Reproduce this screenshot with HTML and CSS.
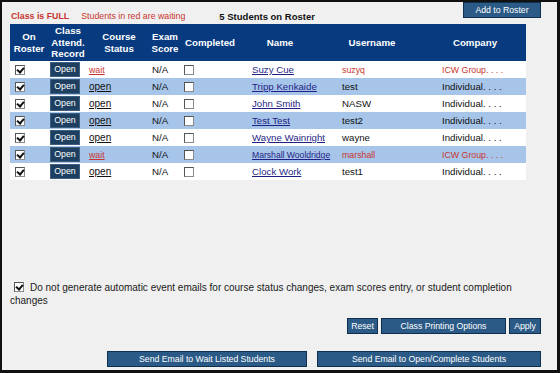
FILE: index.html
```html
<!DOCTYPE html>
<html lang="en">
<head>
    <meta charset="UTF-8" />
    <title>Class Roster</title>
    <link rel="stylesheet" href="styles.css">
</head>
<body>
    <div class="frame">
        <div class="topbar">
            <span class="full">Class is FULL</span>
            <span class="waiting">Students in red are waiting</span>
            <span class="count">5 Students on Roster</span>
            <button class="btn btn-add">Add to Roster</button>
        </div>

        <table class="roster">
            <thead>
                <tr>
                    <th class="c-roster">On<br>Roster</th>
                    <th class="c-attend">Class<br>Attend.<br>Record</th>
                    <th class="c-status">Course<br>Status</th>
                    <th class="c-exam">Exam<br>Score</th>
                    <th class="c-done">Completed</th>
                    <th class="c-name">Name</th>
                    <th class="c-user">Username</th>
                    <th class="c-company">Company</th>
                </tr>
            </thead>
            <tbody>
                <tr class="waitlist">
                    <td class="c-roster"><span class="cb checked"></span></td>
                    <td class="c-attend"><span class="open-btn">Open</span></td>
                    <td class="c-status"><a class="status">wait</a></td>
                    <td class="c-exam">N/A</td>
                    <td class="c-done"><span class="cb"></span></td>
                    <td class="c-name"><a class="name">Suzy Cue</a></td>
                    <td class="c-user">suzyq</td>
                    <td class="c-company">ICW Group. . . .</td>
                </tr>
                <tr class="alt">
                    <td class="c-roster"><span class="cb checked"></span></td>
                    <td class="c-attend"><span class="open-btn">Open</span></td>
                    <td class="c-status"><a class="status">open</a></td>
                    <td class="c-exam">N/A</td>
                    <td class="c-done"><span class="cb"></span></td>
                    <td class="c-name"><a class="name">Tripp Kenkaide</a></td>
                    <td class="c-user">test</td>
                    <td class="c-company">Individual. . . .</td>
                </tr>
                <tr>
                    <td class="c-roster"><span class="cb checked"></span></td>
                    <td class="c-attend"><span class="open-btn">Open</span></td>
                    <td class="c-status"><a class="status">open</a></td>
                    <td class="c-exam">N/A</td>
                    <td class="c-done"><span class="cb"></span></td>
                    <td class="c-name"><a class="name">John Smith</a></td>
                    <td class="c-user">NASW</td>
                    <td class="c-company">Individual. . . .</td>
                </tr>
                <tr class="alt">
                    <td class="c-roster"><span class="cb checked"></span></td>
                    <td class="c-attend"><span class="open-btn">Open</span></td>
                    <td class="c-status"><a class="status">open</a></td>
                    <td class="c-exam">N/A</td>
                    <td class="c-done"><span class="cb"></span></td>
                    <td class="c-name"><a class="name">Test Test</a></td>
                    <td class="c-user">test2</td>
                    <td class="c-company">Individual. . . .</td>
                </tr>
                <tr>
                    <td class="c-roster"><span class="cb checked"></span></td>
                    <td class="c-attend"><span class="open-btn">Open</span></td>
                    <td class="c-status"><a class="status">open</a></td>
                    <td class="c-exam">N/A</td>
                    <td class="c-done"><span class="cb"></span></td>
                    <td class="c-name"><a class="name">Wayne Wainright</a></td>
                    <td class="c-user">wayne</td>
                    <td class="c-company">Individual. . . .</td>
                </tr>
                <tr class="alt waitlist">
                    <td class="c-roster"><span class="cb checked"></span></td>
                    <td class="c-attend"><span class="open-btn">Open</span></td>
                    <td class="c-status"><a class="status">wait</a></td>
                    <td class="c-exam">N/A</td>
                    <td class="c-done"><span class="cb"></span></td>
                    <td class="c-name"><a class="name small">Marshall Wooldridge</a></td>
                    <td class="c-user">marshall</td>
                    <td class="c-company">ICW Group. . . .</td>
                </tr>
                <tr>
                    <td class="c-roster"><span class="cb checked"></span></td>
                    <td class="c-attend"><span class="open-btn">Open</span></td>
                    <td class="c-status"><a class="status">open</a></td>
                    <td class="c-exam">N/A</td>
                    <td class="c-done"><span class="cb"></span></td>
                    <td class="c-name"><a class="name">Clock Work</a></td>
                    <td class="c-user">test1</td>
                    <td class="c-company">Individual. . . .</td>
                </tr>
            </tbody>
        </table>

        <p class="note"><span class="cb checked"></span>Do not generate automatic event emails for course status changes, exam scores entry, or student completion changes</p>

        <div class="actions">
            <button class="btn btn-reset">Reset</button>
            <button class="btn btn-print">Class Printing Options</button>
            <button class="btn btn-apply">Apply</button>
        </div>

        <div class="actions emails">
            <button class="btn btn-wait">Send Email to Wait Listed Students</button>
            <button class="btn btn-open">Send Email to Open/Complete Students</button>
        </div>
    </div>
</body>
</html>
```

FILE: styles.css
```css
* {
    box-sizing: border-box;
    margin: 0;
    padding: 0;
}

body {
    font-family: "Liberation Sans", Arial, sans-serif;
    background: #fff;
}

.frame {
    width: 560px;
    height: 373px;
    background: #f0f0f0;
    border-top: 2px solid #111;
    border-left: 2px solid #111;
    border-right: 3px solid #111;
    border-bottom: 3px solid #111;
    padding: 0 16px 0 8px;
}

/* top line */
.topbar {
    display: flex;
    align-items: flex-start;
    height: 22px;
}

.full, .waiting, .count {
    margin-top: 9px;
    line-height: 11px;
}

.full {
    margin-left: 1px;
    color: #c8352f;
    font-weight: bold;
    font-size: 8.8px;
}

.waiting {
    margin-left: 12px;
    color: #c8352f;
    font-size: 8.8px;
}

.count {
    margin-left: 34px;
    font-weight: bold;
    font-size: 9.5px;
    color: #111;
}

.btn {
    font-family: "Liberation Sans", Arial, sans-serif;
    font-size: 8.7px;
    color: #fff;
    background: #2b5a86;
    border: 1px solid #0f2f4f;
    height: 16px;
    line-height: 14px;
    cursor: pointer;
}

.btn-add {
    margin-left: auto;
    width: 78px;
}

/* roster table */
.roster {
    width: 516px;
    table-layout: fixed;
    border-collapse: collapse;
    font-size: 9.7px;
    color: #111;
}

.roster th {
    background: #073a7e;
    color: #fff;
    font-weight: bold;
    font-size: 9.7px;
    line-height: 11.5px;
    height: 37px;
    text-align: center;
    vertical-align: middle;
    padding: 0;
}

.roster td {
    height: 17px;
    padding: 0;
    vertical-align: middle;
    white-space: nowrap;
    overflow: hidden;
    background: #fff;
}

.roster tr.alt td {
    background: #a7c5e9;
}

.roster .c-roster { width: 38px; }
.roster .c-attend { width: 40px; }
.roster .c-status { width: 62px; }
.roster .c-exam { width: 30px; }
.roster .c-done { width: 60px; }
.roster .c-name { width: 80px; }
.roster .c-user { width: 104px; }
.roster .c-company { width: 102px; }

.roster td.c-roster { padding-left: 5px; }
.roster td.c-attend { padding-left: 2px; }
.roster td.c-status { padding-left: 1px; }
.roster td.c-exam { padding-left: 2px; }
.roster td.c-done { padding-left: 4px; }
.roster td.c-name { padding-left: 12px; overflow: visible; }
.roster td.c-user { padding-left: 22px; }
.roster td.c-company { padding-left: 18px; }

.open-btn {
    display: inline-block;
    width: 30px;
    height: 15px;
    line-height: 13px;
    text-align: center;
    font-size: 8.8px;
    color: #fff;
    background: #1e3f60;
    border: 1px solid #3c5f80;
    vertical-align: middle;
}

.status {
    color: #111;
    text-decoration: underline;
    font-size: 10px;
}

.name {
    color: #1f1f85;
    text-decoration: underline;
}

.name.small {
    font-size: 8.6px;
}

.waitlist .status,
.waitlist .c-user,
.waitlist .c-company {
    color: #c8352f;
    font-size: 8.8px;
}

/* checkboxes */
.cb {
    display: inline-block;
    width: 10px;
    height: 10px;
    background: #fff;
    border: 1px solid #8a8a8a;
    border-top-color: #555;
    border-left-color: #555;
    vertical-align: middle;
    position: relative;
}

.cb.checked::after {
    content: "";
    position: absolute;
    left: 2px;
    top: 0px;
    width: 3px;
    height: 5px;
    border-right: 2px solid #111;
    border-bottom: 2px solid #111;
    transform: rotate(40deg);
}

/* bottom */
.note {
    margin-top: 102px;
    width: 530px;
    font-size: 10px;
    line-height: 12.5px;
    color: #1a1a1a;
}

.note .cb {
    margin: -2px 6px 0 4px;
}

.actions {
    display: flex;
    justify-content: flex-end;
    gap: 3px;
    margin-top: 11px;
}

.btn-reset { width: 31px; }
.btn-print { width: 125px; }
.btn-apply { width: 32px; }

.emails {
    gap: 10px;
    margin-top: 17px;
}

.btn-wait { width: 200px; }
.btn-open { width: 224px; }
```
